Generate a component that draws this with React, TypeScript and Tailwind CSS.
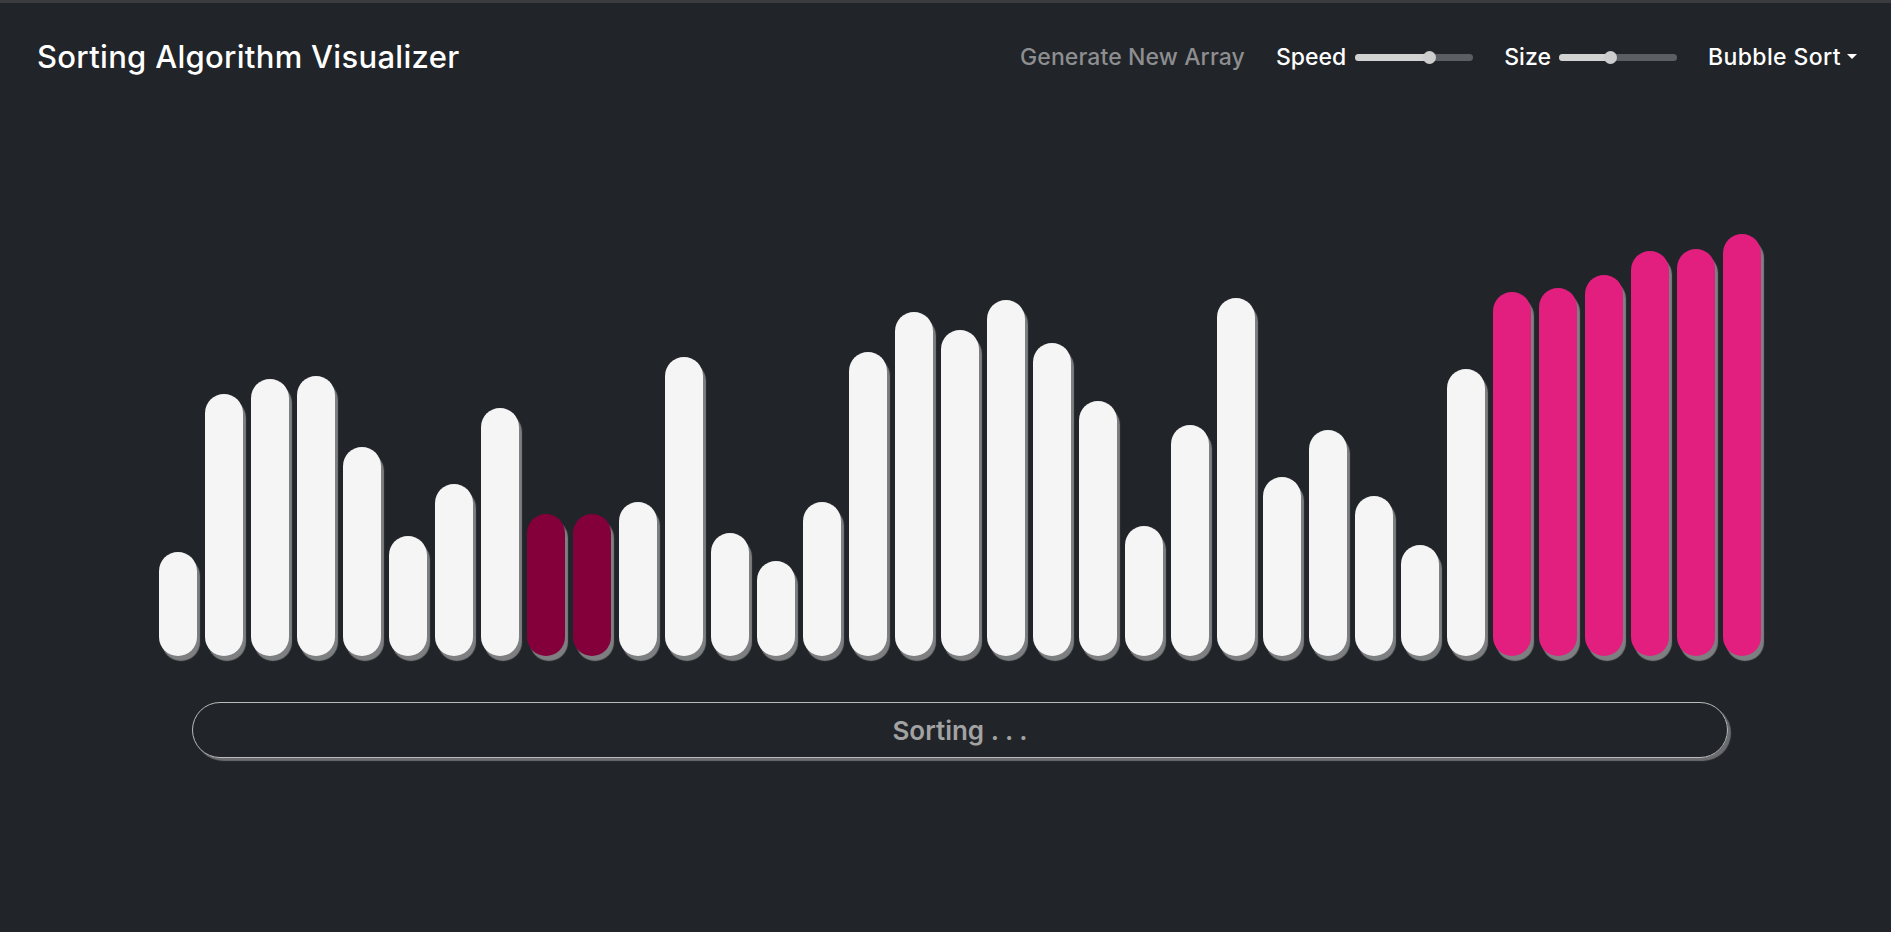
import React from 'react';

const values = [
  104, 262, 277, 280, 209, 120, 172, 248, 142, 142, 154, 299, 123, 95, 154, 304, 344, 326,
  356, 313, 255, 130, 231, 358, 179, 226, 160, 111, 287, 364, 368, 381, 405, 407, 422,
];

// bars being compared right now, and the tail that is already sorted
const comparing = [8, 9];
const sortedFrom = 29;

function Slider({ filled }: { filled: number }) {
  return (
    <div className="flex items-center w-[118px] h-[7px] rounded-full bg-[#5b5e62]">
      <div className="h-full rounded-l-full bg-[#d2d2d2]" style={{ width: filled }} />
      <div className="w-[13px] h-[13px] -ml-[6px] rounded-full bg-[#cdcdcd] shrink-0" />
    </div>
  );
}

export default function App() {
  return (
    <div className="min-h-screen bg-[#212428] border-t-[3px] border-[#3b3c3f] font-['Inter',sans-serif]">
      <header className="h-[108px] flex items-center justify-between pl-[37px] pr-[34px]">
        <h1 className="text-[31px] font-medium text-white tracking-[0.3px]">Sorting Algorithm Visualizer</h1>
        <nav className="flex items-center gap-[31px] text-[23px] font-medium">
          <button className="text-[#8d8e90] tracking-[0.1px]">Generate New Array</button>
          <div className="flex items-center gap-[9px] text-white">
            <span>Speed</span>
            <Slider filled={74} />
          </div>
          <div className="flex items-center gap-[8px] text-white">
            <span>Size</span>
            <Slider filled={51} />
          </div>
          <button className="flex items-center gap-[6px] text-white">
            <span className="tracking-[0.4px]">Bubble Sort</span>
            <span className="w-0 h-0 border-t-[5px] border-x-[5px] border-x-transparent border-t-white -mt-[2px]" />
          </button>
        </nav>
      </header>

      <main className="flex flex-col items-center pl-[29px]">
        <div className="h-[545px] flex items-end gap-2">
          {values.map((v, i) => {
            let color = 'bg-[#f5f5f5]';
            if (comparing.includes(i)) color = 'bg-[#84003a]';
            else if (i >= sortedFrom) color = 'bg-[#e21f7f]';
            return (
              <div
                key={i}
                className={`w-[38px] rounded-full shadow-[3px_5px_1px_#7e7f81] ${color}`}
                style={{ height: v }}
              />
            );
          })}
        </div>

        <div className="mt-[46px] w-[1536px] h-[56px] rounded-full border border-[#bcbcbc] shadow-[3px_3px_1px_#6b6d70] flex items-center justify-center">
          <span className="text-[26px] font-semibold text-[#a2a2a3]">Sorting . . .</span>
        </div>
      </main>
    </div>
  );
}
